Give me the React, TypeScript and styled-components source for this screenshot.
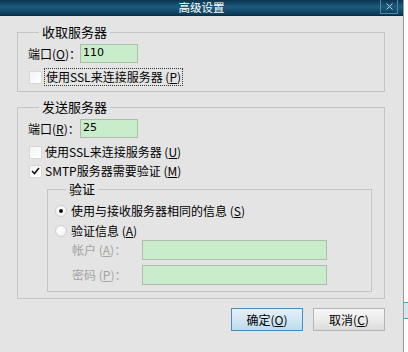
import * as React from "react";
import styled, { createGlobalStyle } from "styled-components";

const GlobalStyle = createGlobalStyle`
	html, body {
		margin: 0;
		padding: 0;
		background: #fff;
	}
	body {
		font-family: "Noto Sans CJK SC", "DejaVu Sans", sans-serif;
		font-size: 12px;
		color: #000;
	}
`;

const Screen = styled.div`
	width: 408px;
	height: 352px;
	display: flex;
	overflow: hidden;
	background: #fff;
`;

const Dialog = styled.div`
	width: 403px;
	height: 352px;
	display: flex;
	flex-direction: column;
	border-right: 1px solid #9a9a9a;
	background: #e4e4e4;
`;

const TitleBar = styled.div`
	height: 15px;
	border-bottom: 1px solid #0a2c40;
	background: linear-gradient(to bottom, #0b3550 0%, #1d5b7c 45%, #12496a 75%, #0c3954 100%);
	display: flex;
	align-items: center;
	justify-content: center;
	position: relative;
	color: #fff;
`;

const Title = styled.span`
	font-size: 11.5px;
	line-height: 15px;
`;

const CloseBox = styled.div`
	position: absolute;
	right: 5px;
	top: 0;
	width: 16px;
	height: 13px;
	border: 1px solid #4d8aa8;
	border-top: none;
	display: flex;
	align-items: center;
	justify-content: center;
`;

const Body = styled.div`
	flex: 1;
	display: flex;
	flex-direction: column;
	padding: 0 18px 0 17px;
`;

const Group = styled.fieldset<{ $top: number; $inner?: boolean }>`
	margin: ${(p) => p.$top}px ${(p) => (p.$inner ? "0 0 19px" : "0 0 0")};
	padding: ${(p) => (p.$inner ? "8px 0 6px 7px" : "5px 12px 6px 10px")};
	border: 1px solid #c4c4c4;
	min-width: 0;
	display: flex;
	flex-direction: column;
`;

const Legend = styled.legend`
	margin-left: 11px;
	padding: 0 3px;
	font-size: 13px;
	line-height: 14px;
	height: 14px;
`;

const Row = styled.div<{ $h: number; $gap?: number }>`
	display: flex;
	align-items: center;
	height: ${(p) => p.$h}px;
	margin-top: ${(p) => p.$gap ?? 0}px;
`;

const Label = styled.span<{ $disabled?: boolean; $indent?: number; $w?: number }>`
	color: ${(p) => (p.$disabled ? "#a3a3a3" : "#000")};
	padding-left: ${(p) => p.$indent ?? 0}px;
	width: ${(p) => (p.$w ? `${p.$w}px` : "auto")};
	flex: none;
	white-space: nowrap;
	line-height: 14px;
`;

const Input = styled.div<{ $w: number; $h?: number; $right?: number }>`
	box-sizing: border-box;
	width: ${(p) => p.$w}px;
	height: ${(p) => p.$h ?? 19}px;
	margin-right: ${(p) => p.$right ?? 0}px;
	margin-left: ${(p) => (p.$right ? "auto" : "0")};
	background: #c9ecca;
	border: 1px solid #aebcae;
	padding: 0 2px;
	font-family: "DejaVu Sans", sans-serif;
	font-size: 11px;
	line-height: 15px;
`;

const Box = styled.span`
	box-sizing: border-box;
	width: 13px;
	height: 13px;
	margin: 0 3px 0 1px;
	border: 1px solid #d8d8d8;
	background: linear-gradient(135deg, #f4f4f4, #ffffff);
	display: inline-flex;
	align-items: center;
	justify-content: center;
	flex: none;
`;

const Focus = styled.span`
	outline: 1px dotted #333;
	outline-offset: 0px;
	padding: 1px 1px;
	line-height: 14px;
`;

const RadioDot = styled.span<{ $on?: boolean }>`
	box-sizing: border-box;
	width: 12px;
	height: 12px;
	border-radius: 50%;
	border: 1px solid #cfcfcf;
	background: radial-gradient(circle at 40% 35%, #ffffff, #ececec);
	margin-right: 4px;
	display: inline-flex;
	align-items: center;
	justify-content: center;
	flex: none;

	&::after {
		content: "";
		width: 4px;
		height: 4px;
		border-radius: 50%;
		background: ${(p) => (p.$on ? "#111" : "transparent")};
	}
`;

const ButtonRow = styled.div`
	margin-top: 9px;
	display: flex;
	justify-content: flex-end;
	gap: 10px;
`;

const Button = styled.div<{ $primary?: boolean }>`
	box-sizing: border-box;
	width: 72px;
	height: 23px;
	display: flex;
	align-items: center;
	justify-content: center;
	border: 1px solid ${(p) => (p.$primary ? "#4a8cb8" : "#b4b4b4")};
	background: ${(p) =>
		p.$primary
			? "linear-gradient(to bottom, #e3f0f8 0%, #d2e7f4 50%, #bcdbee 100%)"
			: "linear-gradient(to bottom, #f6f6f6 0%, #ececec 50%, #dcdcdc 100%)"};
	font-size: 12px;
`;

const Edge = styled.div`
	flex: 1;
	display: flex;
	flex-direction: column;
	background: #fff;
`;

const EdgeBar = styled.div`
	height: 15px;
	margin-top: 302px;
	background: #d6e8ef;
	border-top: 1px solid #5b99b0;
	border-bottom: 1px solid #5b99b0;
`;

const Check = () => (
	<svg width="9" height="8" viewBox="0 0 9 8">
		<path d="M1 4 L3.5 6.5 L8 1" fill="none" stroke="#111" strokeWidth="1.6" />
	</svg>
);

const Cross = () => (
	<svg width="7" height="7" viewBox="0 0 7 7">
		<path d="M0.5 0.5 L6.5 6.5 M6.5 0.5 L0.5 6.5" stroke="#b9d3e0" strokeWidth="1" />
	</svg>
);

const Key = ({ k, tight }: { k: string; tight?: boolean }) => (
	<span>
		{tight ? "" : " "}(<u>{k}</u>)
	</span>
);

export default function App() {
	return (
		<Screen>
			<GlobalStyle />
			<Dialog>
				<TitleBar>
					<Title>高级设置</Title>
					<CloseBox><Cross /></CloseBox>
				</TitleBar>
				<Body>
					<Group $top={9}>
						<Legend>收取服务器</Legend>
						<Row $h={19}>
							<Label $w={52}>端口<Key k="O" tight />：</Label>
							<Input $w={58}>110</Input>
						</Row>
						<Row $h={16} $gap={6}>
							<Box />
							<Focus>使用SSL来连接服务器<Key k="P" /></Focus>
						</Row>
					</Group>
					<Group $top={8}>
						<Legend>发送服务器</Legend>
						<Row $h={19}>
							<Label $w={52}>端口<Key k="R" tight />：</Label>
							<Input $w={58}>25</Input>
						</Row>
						<Row $h={16} $gap={6}>
							<Box />
							<Label>使用SSL来连接服务器<Key k="U" /></Label>
						</Row>
						<Row $h={16} $gap={3}>
							<Box><Check /></Box>
							<Label>SMTP服务器需要验证<Key k="M" /></Label>
						</Row>
						<Group $top={3} $inner>
							<Legend>验证</Legend>
							<Row $h={14}>
								<RadioDot $on />
								<Label>使用与接收服务器相同的信息<Key k="S" /></Label>
							</Row>
							<Row $h={14} $gap={6}>
								<RadioDot />
								<Label>验证信息<Key k="A" /></Label>
							</Row>
							<Row $h={20} $gap={2}>
								<Label $disabled $indent={17}>帐户<Key k="A" />：</Label>
								<Input $w={185} $h={20} $right={44} />
							</Row>
							<Row $h={20} $gap={5}>
								<Label $disabled $indent={17}>密码<Key k="P" />：</Label>
								<Input $w={185} $h={20} $right={44} />
							</Row>
						</Group>
					</Group>
					<ButtonRow>
						<Button $primary>确定<Key k="O" /></Button>
						<Button>取消<Key k="C" /></Button>
					</ButtonRow>
				</Body>
			</Dialog>
			<Edge>
				<EdgeBar />
			</Edge>
		</Screen>
	);
}
